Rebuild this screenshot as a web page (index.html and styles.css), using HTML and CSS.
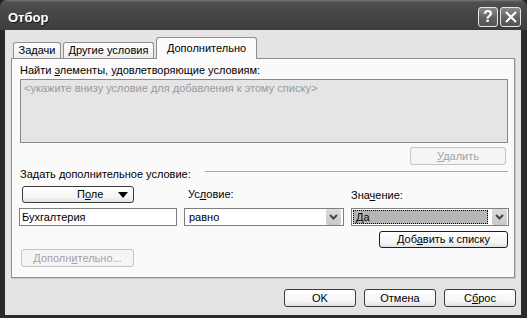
FILE: index.html
```html
<!DOCTYPE html>
<html lang="ru">
<head>
<meta charset="utf-8">
<title>Отбор</title>
<link rel="stylesheet" href="styles.css">
</head>
<body>
<div class="window">
  <div class="titlebar">
    <span class="title">Отбор</span>
    <div class="tbtns">
      <span class="tbtn help">?</span>
      <span class="tbtn close"><svg width="14" height="14" viewBox="0 0 14 14"><path d="M2 2 L12 12 M12 2 L2 12" stroke="#fff" stroke-width="2.2" fill="none"/></svg></span>
    </div>
  </div>
  <div class="body">
    <div class="tabs">
      <div class="tab tab-1">Задачи</div>
      <div class="tab tab-2">Другие условия</div>
      <div class="tab tab-3 active">Дополнительно</div>
    </div>
    <div class="panel">
      <div class="lbl">Найти <u>э</u>лементы, удовлетворяющие условиям:</div>
      <div class="listbox">&lt;укажите внизу условие для добавления к этому списку&gt;</div>
      <div class="del-row"><div class="btn disabled del"><span><u>У</u>далить</span></div></div>
      <div class="group-head"><span>Задать дополнительное условие:</span><span class="sep"></span></div>
      <div class="grid">
        <div class="btn field-btn"><span>П<u>о</u>ле</span><svg class="tri" width="10" height="6" viewBox="0 0 10 6"><path d="M0 0 H10 L5 6 Z" fill="#000"/></svg></div>
        <div class="lbl cond-lbl">Ус<u>л</u>овие:</div>
        <div class="lbl val-lbl">Зна<u>ч</u>ение:</div>
        <div class="input">Бухгалтерия</div>
        <div class="combo"><span class="ctext">равно</span><span class="carrow"><svg width="9" height="6" viewBox="0 0 9 6"><path d="M1 1 L4.5 4.5 L8 1" stroke="#444" stroke-width="2" fill="none"/></svg></span></div>
        <div class="combo combo-val"><span class="csel">Да</span><span class="carrow"><svg width="9" height="6" viewBox="0 0 9 6"><path d="M1 1 L4.5 4.5 L8 1" stroke="#444" stroke-width="2" fill="none"/></svg></span></div>
        <div class="btn add-btn"><span>Доб<u>а</u>вить к списку</span></div>
      </div>
      <div class="btn disabled more-btn"><span>Дополн<u>и</u>тельно...</span></div>
    </div>
    <div class="footer">
      <div class="btn fbtn">OK</div>
      <div class="btn fbtn">Отмена</div>
      <div class="btn fbtn">С<u>б</u>рос</div>
    </div>
  </div>
</div>
</body>
</html>
```
FILE: styles.css
```css
* { box-sizing: border-box; }
html, body { margin: 0; padding: 0; }
body {
  width: 527px;
  height: 318px;
  overflow: hidden;
  background: #242424;
  font-family: "Liberation Sans", Arial, sans-serif;
  font-size: 11px;
  color: #000;
}
u { text-decoration: underline; text-underline-offset: 1px; }
.window {
  width: 527px;
  height: 318px;
  display: flex;
  flex-direction: column;
  background: #2a2a2a;
  border-radius: 7px 7px 0 0;
}
.titlebar {
  height: 30px;
  flex: none;
  display: flex;
  align-items: flex-start;
  padding: 0 6px 0 8px;
  background: linear-gradient(#7a7a7a 0, #505050 2px, #474747 40%, #3d3d3d 100%);
  border-radius: 7px 7px 0 0;
}
.title {
  margin-top: 10px;
  font-weight: bold;
  font-size: 13px;
  line-height: 16px;
  color: #fff;
  text-shadow: 1px 1px 0 #1a1a1a;
}
.tbtns { margin-left: auto; margin-top: 7px; display: flex; gap: 2px; }
.tbtn {
  height: 20px;
  border: 1px solid #e6e6e6;
  border-radius: 3px;
  background: linear-gradient(#8a8a8a, #5e5e5e 60%, #555);
  display: flex;
  align-items: center;
  justify-content: center;
  color: #fff;
}
.help { width: 20px; font-weight: bold; font-size: 16px; line-height: 18px; }
.close { width: 21px; }
.body {
  flex: 1;
  margin: 0 6px 3px 5px;
  background: #e4e4e4;
  padding: 7px 6px 8px 6px;
  display: flex;
  flex-direction: column;
}
.tabs { display: flex; align-items: flex-end; height: 21px; margin-left: 2px; }
.tab {
  height: 16px;
  border: 1px solid #8f8f8f;
  border-bottom: none;
  border-radius: 3px 3px 0 0;
  background: linear-gradient(#fefefe, #ededed);
  display: flex;
  align-items: center;
  justify-content: center;
  margin-right: 2px;
  line-height: 13px;
}
.tab-1 { width: 48px; }
.tab-2 { width: 91px; }
.tab-3 { width: 101px; }
.tab.active {
  height: 22px;
  margin-bottom: -1px;
  position: relative;
  z-index: 1;
  background: #fcfbfc;
  padding-bottom: 1px;
}
.panel {
  height: 220px;
  flex: none;
  border: 1px solid #8f8f8f;
  background: #fbfafb;
  padding: 5px 6px 0 8px;
  box-shadow: 1px 1px 0 #c8c8c8;
}
.lbl { line-height: 13px; height: 13px; white-space: nowrap; }
.listbox {
  margin-top: 2px;
  height: 64px;
  border: 1px solid #8a8a8a;
  background: #e5e5e5;
  color: #9a9a9a;
  padding: 2px 3px;
  line-height: 13px;
}
.del-row { display: flex; justify-content: flex-end; margin-top: 4px; padding-right: 2px; }
.btn {
  height: 18px;
  border: 1px solid #3a3a3a;
  border-radius: 3px;
  background: linear-gradient(#ffffff, #f4f4f4 70%, #e2e2e2);
  display: flex;
  align-items: center;
  justify-content: center;
  line-height: 13px;
  color: #000;
  white-space: nowrap;
}
.btn.disabled { border-color: #c4c4c4; color: #a3a3a3; background: #f6f5f6; }
.del { width: 96px; }
.group-head { display: flex; align-items: flex-start; margin-top: 3px; height: 13px; line-height: 13px; }
.sep { flex: 1; height: 1px; background: #a8a8a8; margin: 3px 0 0 14px; }
.grid {
  display: grid;
  grid-template-columns: 158px 160px 158px;
  grid-template-rows: 17px 18px 17px;
  column-gap: 7px;
  row-gap: 5px;
  margin: 5px -1px 0 -1px;
}
.field-btn {
  width: 112px;
  height: 17px;
  margin-left: 3px;
  justify-content: flex-start;
  padding-left: 54px;
}
.tri { margin-left: auto; margin-right: 5px; }
.cond-lbl { align-self: center; padding-left: 4px; }
.val-lbl { align-self: center; margin-top: 2px; }
.input {
  border: 1px solid #7f7f7f;
  background: #fff;
  padding: 0 2px;
  line-height: 16px;
}
.combo {
  border: 1px solid #7f7f7f;
  background: #fff;
  display: flex;
  align-items: stretch;
  line-height: 16px;
}
.ctext { padding-left: 4px; }
.carrow {
  width: 15px;
  margin: 0 2px 0 auto;
  background: linear-gradient(#dcdcdc, #c8c8c8);
  border-radius: 2px;
  display: flex;
  align-items: center;
  justify-content: center;
}
.combo-val .carrow { margin-right: 1px; }
.csel {
  flex: 1;
  margin: 1px 4px 1px 1px;
  background: #b5b5b5;
  border: 1px dotted #000;
  padding-left: 2px;
  line-height: 12px;
}
.add-btn {
  grid-column: 3;
  grid-row: 3;
  width: 129px;
  height: 17px;
  justify-self: end;
  margin-right: 1px;
  border-color: #1e1e1e;
}
.more-btn { width: 113px; margin: 1px 0 0 1px; }
.footer { display: flex; justify-content: flex-end; gap: 8px; margin: 11px -1px 0 0; }
.fbtn { width: 72px; }
```
